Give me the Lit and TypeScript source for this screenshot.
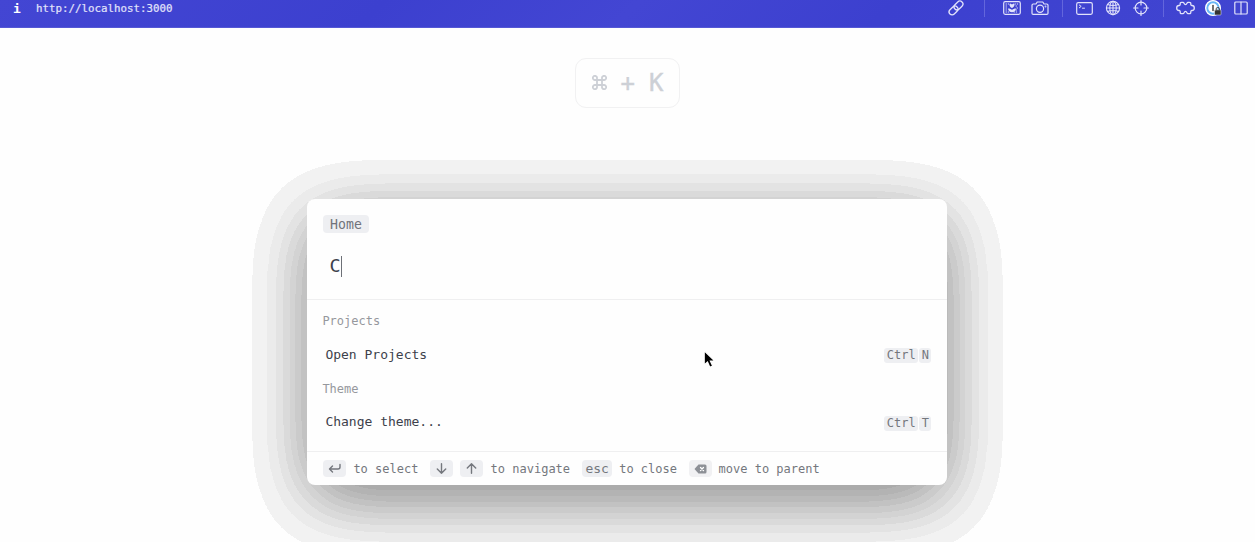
import { LitElement, html, svg, css } from "lit";
import { customElement } from "lit/decorators.js";

// Alpha lookup that splits the soft shadow into even tonal bands.
const STEPS = 250;
const BANDS = Array.from({ length: STEPS }, (_, i) => {
  const a = i / STEPS;
  const k = a < 0.1 ? (a < 0.046 ? 0 : 1) : Math.floor((a + 0.011) / 0.0625);
  return (k === 0 ? 0 : (k * 8 + 4) / 255).toFixed(4);
}).join(" ");

const icon = (w: number, h: number, body: unknown) =>
  html`<svg class="ic" width=${w} height=${h} viewBox="0 0 ${w} ${h}">${body}</svg>`;

@customElement("app-root")
export class AppRoot extends LitElement {
  static styles = css`
    :host { display: block; position: relative; width: 1255px; height: 542px; overflow: hidden; background: #fefefe;
      font-family: "DejaVu Sans Mono", monospace; color: #3d414b; }
    * { box-sizing: border-box; }
    .bar { height: 28px; padding: 0 7px 10px 13px; display: flex; align-items: center; border-bottom: 1px solid #5558d5;
      background: linear-gradient(135deg, #4346d3, #3c40cf 30%, #4346d3 50%, #3c40cf 70%, #4145d1); color: #e2e3fb; font-size: 10.8px; }
    .info { width: 23px; font-weight: 700; font-size: 13px; color: #fff; line-height: 18px; }
    .url { flex: 1; -webkit-text-stroke: .2px #e2e3fb; }
    .tools { display: flex; align-items: center; height: 17px; margin-top: -1px; }
    .ic { display: block; fill: none; stroke: currentColor; stroke-width: 1.2; stroke-linecap: round; stroke-linejoin: round; flex: none; }
    .tools .ic { margin-left: 12px; }
    .sep { width: 1px; height: 18px; background: #6366dc; margin: 0 6px 0 20px; }
    .sep.b { margin-left: 13px; margin-right: 1px; }
    .sep.c { margin-left: 14px; margin-right: 0; }
    .cam { margin-left: -2px; }
    .pz { margin-right: -2px; }
    .hot { width: 105px; height: 50px; margin: 30px auto 0; border: 1px solid #f1f1f2; border-radius: 11px;
      display: flex; align-items: center; justify-content: center; color: #cdd0d6; font-size: 24px; white-space: pre;
      -webkit-text-stroke: .4px #cdd0d6; }
    .hot .ic { margin: -2px 14px 0 0; stroke-width: 1.8; }
    .hot .plus { margin-right: 14px; }
    .halo { position: absolute; left: 0; top: 0; pointer-events: none; }
    .panel { position: relative; width: 640px; height: 286px; margin: 91px 0 0 307.4px; background: #fefefe; border-radius: 8px;
      display: flex; flex-direction: column; }
    .head { height: 101px; border-bottom: 1px solid #efeff0; padding: 16px 16px 0; display: flex; flex-direction: column; align-items: flex-start; }
    .chip { height: 18px; padding: 0 6.7px; border-radius: 4px; background: #eeeff2; color: #71747b; font-size: 13.2px; line-height: 19px; }
    .input { display: flex; align-items: center; height: 22px; margin: 22px 0 0 6px; font-size: 18.5px; line-height: 20px; }
    .caret { width: 1px; height: 21px; background: #6d7077; }
    .list { flex: 1; padding: 11px 16px 0 15px; }
    .group { height: 20px; line-height: 20px; font-size: 12px; color: #96989d; }
    .row { height: 47.5px; padding: 0 0 1px 3px; display: flex; align-items: center; font-size: 13px; }
    .name { flex: 1; }
    .keys { display: flex; gap: 1px; margin-top: 3px; }
    .key { height: 15px; line-height: 15px; padding: 0 2.7px; border-radius: 3px; background: #eeeff2; color: #74777d; font-size: 12px; }
    .key.one { padding: 0 2.4px; }
    .foot { height: 34px; border-top: 1px solid #efeff0; padding: 0 15.6px; display: flex; align-items: center; font-size: 12px; color: #74777d; }
    .cap { width: 23px; height: 17px; border-radius: 4px; background: #eeeff2; display: flex; align-items: center; justify-content: center; }
    .cap.up { margin-left: 7px; }
    .cap.esc { width: 30.5px; font-size: 13px; }
    .cap.back { background: #f1f1f3; }
    .hint { margin: 0 11.8px 0 7.4px; white-space: pre; }
    .hint.near { margin-left: 6.8px; }
    .cursor { position: absolute; left: 703px; top: 350px; }
  `;

  private tools() {
    return html`<div class="tools">
      ${icon(16, 16, svg`<g transform="rotate(-45 8 8)" stroke-width="1.3"><rect x="-.5" y="5" width="10" height="6" rx="3"/><rect x="6.500" y="5" width="10" height="6" rx="3"/></g>`)}
      <span class="sep"></span>
      ${icon(18, 14, svg`<rect x=".7" y=".7" width="16.6" height="12.6" rx="1.5"/><path stroke-width="1" stroke-dasharray=".5 1.700" d="M3 3h3M3 5h2M3 7h1M3 9h2M3 11h4M12 3h3M13 5h2M14 7h1M13 9h2M11 11h4"/><path fill="currentColor" stroke="none" d="M9 7C6 5.500 6 2.500 7.500 2.500L9 3.500l1.500-1C12 2.500 12 5.500 9 7zM5 7.500c2 0 3 .5 4 1.500 1-1 2-1.500 4-1.500 0 2-2 3.800-4 3.800S5 9.500 5 7.500z"/>`)}
      <span class="cam">${icon(18, 14, svg`<path d="M1 4.200q0-1.200 1.200-1.200H5l1.200-2h5.600L13 3h2.800Q17 3 17 4.200v8q0 1.200-1.200 1.200H2.200Q1 13.400 1 12.200z"/><circle cx="9" cy="7.800" r="3.600"/><circle cx="14.500" cy="5.500" r=".3"/>`)}</span>
      <span class="sep b"></span>
      ${icon(17, 13, svg`<rect x=".7" y=".7" width="15.600" height="11.600" rx="1.500"/><path stroke-width="1" d="M3.300 3l1.900 1.400-1.900 1.400M6.500 6.200h2"/>`)}
      ${icon(16, 16, svg`<g stroke-width="1.100"><circle cx="8" cy="8" r="6.600"/><ellipse cx="8" cy="8" rx="3.200" ry="6.600"/><path d="M8 1.400v13.200M1.400 8h13.200M2.500 4.500q5.500 2 11 0M2.500 11.500q5.500-2 11 0"/></g>`)}
      ${icon(16, 16, svg`<circle cx="8" cy="8" r="5.800"/><path d="M8 .600v4.400M8 11v4.400M.600 8H5M11 8h4.400"/>`)}
      <span class="sep c"></span>
      <span class="pz">${icon(19, 14, svg`<path stroke-width="1.300" d="M7 1.300C8.300 1.300 7.800 3.600 9.500 3.600S10.700 1.300 12 1.300H13.300Q15 1.300 14.800 3 14.700 4.600 16 4.500A2.300 2.500 0 0 1 16 9.500Q14.700 9.400 14.800 11 15 12.700 13.300 12.700H12C10.700 12.700 11.200 10.400 9.500 10.400S8.300 12.700 7 12.700H5.700Q4 12.700 4.200 11 4.300 9.400 3 9.500A2.300 2.500 0 0 1 3 4.500Q4.300 4.600 4.200 3 4 1.300 5.700 1.300z"/>`)}</span>
      ${icon(17, 17, svg`<circle cx="8" cy="8" r="7.400" fill="#fff" stroke="#fff"/><circle cx="8" cy="8" r="5.700" fill="#fff" stroke="#68b6f6" stroke-width="1.900"/><path d="M8 5.500v5" stroke="#444" stroke-width="1.500"/><rect x="9.500" y="9.800" width="6.500" height="5.200" rx=".8" fill="#333" stroke="#fff" stroke-width=".5"/><path d="M11.200 9.800V8.800q0-1.300 1.600-1.300t1.600 1.300v1" stroke="#444" stroke-width="1"/>`)}
      ${icon(14, 14, svg`<rect x=".8" y="1" width="12.400" height="12" rx="1"/><path d="M7 1v12"/>`)}
    </div>`;
  }

  render() {
    return html`
      <svg class="halo" width="1255" height="542">
        <defs>
          <filter id="f" filterUnits="userSpaceOnUse" x="100" y="0" width="1060" height="760" color-interpolation-filters="sRGB">
            <feGaussianBlur stdDeviation="35" />
            <feComponentTransfer><feFuncA type="discrete" tableValues=${BANDS} /></feComponentTransfer>
          </filter>
        </defs>
        <rect x="307.5" y="215" width="640" height="286" rx="8" filter="url(#f)" />
      </svg>
      <div class="bar"><span class="info">i</span><span class="url">http://localhost:3000</span>${this.tools()}</div>
      <div class="hot">
        ${icon(15, 15, svg`<path d="M5 5h5v5H5zM5 5V3.200A2.100 2.100 0 1 0 3 5zM10 5V3.200A2.100 2.100 0 1 1 12 5zM5 10v1.800A2.100 2.100 0 1 1 3 10zM10 10v1.800A2.100 2.100 0 1 0 12 10z"/>`)}
        <span class="plus">+</span><span>K</span>
      </div>
      <div class="panel">
        <div class="head">
          <span class="chip">Home</span>
          <div class="input"><span>C</span><span class="caret"></span></div>
        </div>
        <div class="list">
          <div class="group">Projects</div>
          <div class="row"><span class="name">Open Projects</span><span class="keys"><span class="key">Ctrl</span><span class="key one">N</span></span></div>
          <div class="group">Theme</div>
          <div class="row"><span class="name">Change theme...</span><span class="keys"><span class="key">Ctrl</span><span class="key one">T</span></span></div>
        </div>
        <div class="foot">
          <span class="cap">${icon(13, 11, svg`<path stroke-width="1.400" d="M12 1.500v2.500q0 2-2 2H1.500M4.500 3L1.500 6l3 3"/>`)}</span><span class="hint">to select</span>
          <span class="cap">${icon(11, 11, svg`<path stroke-width="1.400" d="M5.500 .800v9.400M1.300 6l4.200 4.200L9.700 6"/>`)}</span>
          <span class="cap up">${icon(11, 11, svg`<path stroke-width="1.400" d="M5.500 10.200V.800M1.300 5L5.500 .800 9.700 5"/>`)}</span><span class="hint">to navigate</span>
          <span class="cap esc">esc</span><span class="hint near">to close</span>
          <span class="cap back">${icon(13, 10, svg`<path fill="#8d9096" stroke="none" d="M4.500 .500H11q1.500 0 1.500 1.500v6q0 1.500-1.500 1.500H4.500L.500 5z"/><path stroke="#fff" stroke-width="1.300" d="M6.500 3.500l3 3M9.500 3.500l-3 3"/>`)}</span><span class="hint near">move to parent</span>
        </div>
      </div>
      <svg class="cursor" width="16" height="22" viewBox="0 0 16 22"><path d="M1.200 .800v14.200l3.300-3 2.300 5.300 2.900-1.200-2.300-5.100h4.500z" fill="#000" stroke="#fff" stroke-width="1.200"/></svg>
    `;
  }
}
